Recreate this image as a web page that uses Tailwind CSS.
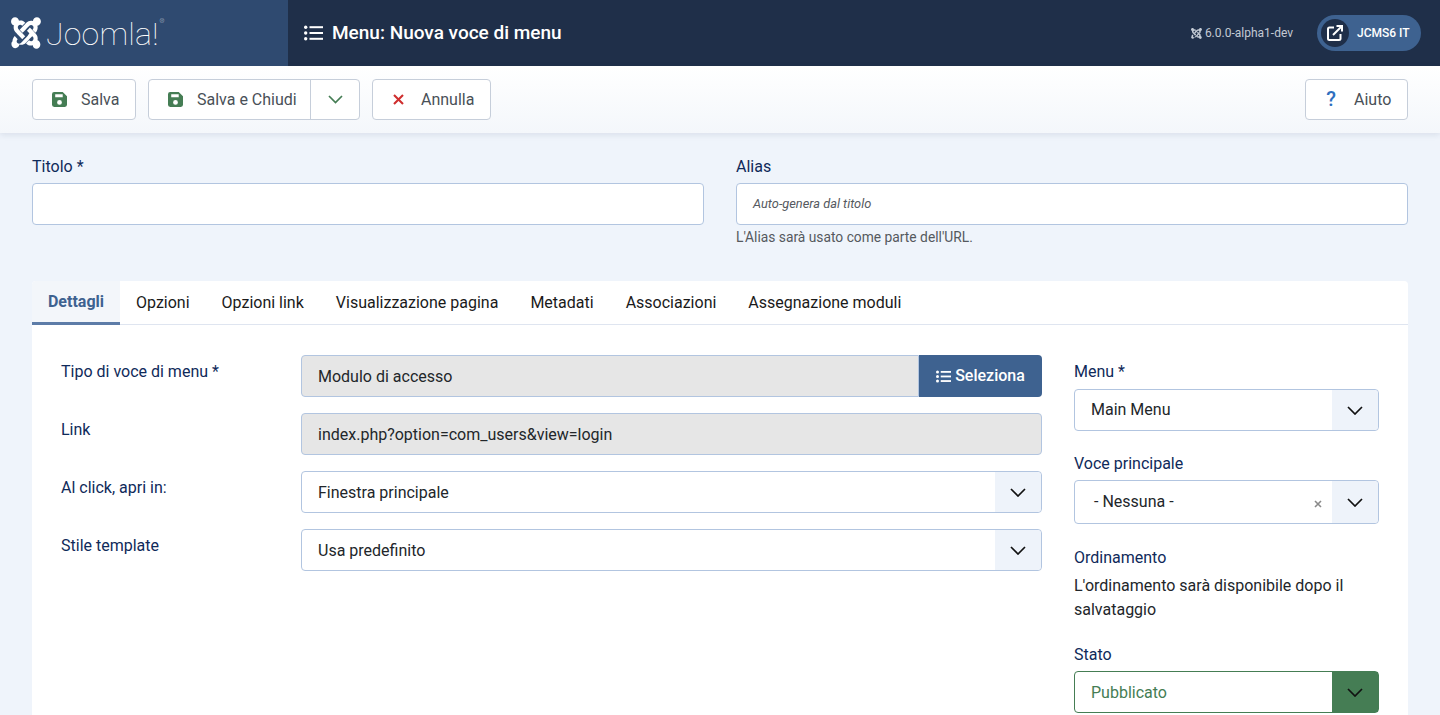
<!doctype html>
<html lang="it">
<head>
<meta charset="utf-8">
<title>Menu: Nuova voce di menu</title>
<script src="https://cdn.jsdelivr.net/npm/@tailwindcss/browser@4"></script>
</head>
<body class="h-[715px] overflow-hidden bg-[#eff4fb] font-['Roboto',sans-serif] text-[16px] text-[#22262a]">
<header class="flex h-[66px] bg-[#1f2f49] text-white">
  <div class="flex w-[288px] items-center gap-[5px] bg-[#2f4a70] pl-[11px]">
    <svg class="h-[32px] w-[30px]" viewBox="0 28 448 456" preserveAspectRatio="none" fill="#fff"><path d="M.6 92.1C.6 58.8 27.4 32 60.4 32c30 0 54.5 21.9 59.2 50.2 32.6-7.6 67.1.6 92.6 26.1l.9.9-44.3 44.3-.9-.9c-20.5-20.5-42.6-16.3-55.4-3.5-14.3 14.3-14.3 37.9 0 52.2l99.5 99.5-44 44.3c-87.7-87.2-49.7-49.7-99.8-99.7-26.8-26.5-35-64.8-24.8-98.9C20.4 144.6.6 120.7.6 92.1zm129.5 116.4l44.3 44.3c10-10 89.7-89.7 99.7-99.8 14.3-14.3 37.6-14.3 51.9 0 12.8 12.8 17 35-3.5 55.4l-.9.9 44 44.3c31.2-31.2 38.5-67.6 28.9-101.2 29.2-4.1 51.9-29.2 51.9-59.5 0-33.2-26.8-60.1-59.8-60.1-30.3 0-55.4 22.5-59.5 51.6-33.8-9.9-71.7-1.5-98.3 25.1-18.3 19.1-71.1 71.5-99.6 99.9zm266.3 152.2c8.2-32.7-.9-68.5-26.3-93.9-11.8-12.1-75.4-75.7-87.4-87.4l-44.3 44.3c25.6 25.6 62.4 62.1 87.5 87.5 14.3 14.3 14.3 37.6 0 51.9-12.8 12.8-35 17-55.4-3.5l-.9-.9-44 44.3.9.9c27.6 27.9 65.3 36.7 99.5 27.1C326.1 461.7 350.3 480 378.6 480c33 0 59.8-26.8 59.8-60.1 0-28.6-20-52.7-42-59.2zm-149-60.4c-29.1 29.3-73.6 73.7-99.8 99.7-14.3 14.3-37.6 14.3-51.9 0-13.1-13.1-16.9-35.4 3.5-55.4l.9-.9-44.3-44.3-.9.9c-30.2 30.2-38.3 65.6-29.2 99.5C29.3 356.3 6 381.6 6 412.3c0 33.2 26.8 60.1 59.8 60.1 30.3 0 54.5-23 59.5-52 34.1 9.8 71.5 1 98.3-25.6 44.2-44.2 62.5-62.6 99.8-99.7l-44.3-44.3z"/></svg>
    <span class="relative pt-[2px] text-[32px] leading-none font-thin tracking-[0.2px]">Joomla!<span class="absolute top-[2px] -right-[6px] text-[6px]">®</span></span>
  </div>
  <div class="flex flex-1 items-center pr-[19px] pl-[16px]">
    <svg class="mr-[9px] h-[16px] w-[19px]" viewBox="0 0 19 16" fill="#fff"><circle cx="1.7" cy="2.2" r="1.7"/><circle cx="1.7" cy="8" r="1.7"/><circle cx="1.7" cy="13.8" r="1.7"/><rect x="5.5" y="1.2" width="13.5" height="2"/><rect x="5.5" y="7" width="13.5" height="2"/><rect x="5.5" y="12.8" width="13.5" height="2"/></svg>
    <h1 class="text-[19px] font-medium">Menu: Nuova voce di menu</h1>
    <div class="ml-auto flex items-center gap-[3px] text-[12px] text-[#c3cad4]">
      <svg class="h-[11px] w-[11px]" viewBox="0 28 448 456" preserveAspectRatio="none" fill="#c3cad4"><path d="M.6 92.1C.6 58.8 27.4 32 60.4 32c30 0 54.5 21.9 59.2 50.2 32.6-7.6 67.1.6 92.6 26.1l.9.9-44.3 44.3-.9-.9c-20.5-20.5-42.6-16.3-55.4-3.5-14.3 14.3-14.3 37.9 0 52.2l99.5 99.5-44 44.3c-87.7-87.2-49.7-49.7-99.8-99.7-26.8-26.5-35-64.8-24.8-98.9C20.4 144.6.6 120.7.6 92.1zm129.5 116.4l44.3 44.3c10-10 89.7-89.7 99.7-99.8 14.3-14.3 37.6-14.3 51.9 0 12.8 12.8 17 35-3.5 55.4l-.9.9 44 44.3c31.2-31.2 38.5-67.6 28.9-101.2 29.2-4.1 51.9-29.2 51.9-59.5 0-33.2-26.8-60.1-59.8-60.1-30.3 0-55.4 22.5-59.5 51.6-33.8-9.9-71.7-1.5-98.3 25.1-18.3 19.1-71.1 71.5-99.6 99.9zm266.3 152.2c8.2-32.7-.9-68.5-26.3-93.9-11.8-12.1-75.4-75.7-87.4-87.4l-44.3 44.3c25.6 25.6 62.4 62.1 87.5 87.5 14.3 14.3 14.3 37.6 0 51.9-12.8 12.8-35 17-55.4-3.5l-.9-.9-44 44.3.9.9c27.6 27.9 65.3 36.7 99.5 27.1C326.1 461.7 350.3 480 378.6 480c33 0 59.8-26.8 59.8-60.1 0-28.6-20-52.7-42-59.2zm-149-60.4c-29.1 29.3-73.6 73.7-99.8 99.7-14.3 14.3-37.6 14.3-51.9 0-13.1-13.1-16.9-35.4 3.5-55.4l.9-.9-44.3-44.3-.9.9c-30.2 30.2-38.3 65.6-29.2 99.5C29.3 356.3 6 381.6 6 412.3c0 33.2 26.8 60.1 59.8 60.1 30.3 0 54.5-23 59.5-52 34.1 9.8 71.5 1 98.3-25.6 44.2-44.2 62.5-62.6 99.8-99.7l-44.3-44.3z"/></svg>
      <span>6.0.0-alpha1-dev</span>
    </div>
    <div class="ml-[24px] flex h-[36px] w-[104px] items-center rounded-full bg-[#3e6290] pl-[4px]">
      <span class="flex h-[28px] w-[28px] items-center justify-center rounded-full bg-[#1f2f49]">
        <svg class="h-[18px] w-[18px]" viewBox="0 0 18 18" fill="none" stroke="#fff" stroke-width="2"><path d="M8 3.5 H3.5 A1.5 1.5 0 0 0 2 5 V14.5 A1.5 1.5 0 0 0 3.5 16 H13 A1.5 1.5 0 0 0 14.5 14.5 V10"/><path d="M7 11 L15.5 2.5"/><path d="M10.5 2 H16 V7.5" /></svg>
      </span>
      <span class="ml-[8px] text-[12px] font-medium whitespace-nowrap">JCMS6 IT</span>
    </div>
  </div>
</header>

<div class="flex h-[67px] items-center justify-between bg-gradient-to-b from-white to-[#f4f7fb] px-[32px] pb-[1px] shadow-[0_2px_6px_rgba(30,50,90,0.1)]">
  <div class="flex gap-[12px]">
    <button class="flex h-[41px] w-[104px] items-center rounded-[4px] border border-[#c6ceda] bg-white pt-[2px] pl-[19px] text-[#495057]">
      <svg class="mr-[14px] -mt-[2px] h-[15px] w-[15px]" viewBox="0 0 14 14" fill="#457d54"><path d="M2 0 H10 L14 4 V12 A2 2 0 0 1 12 14 H2 A2 2 0 0 1 0 12 V2 A2 2 0 0 1 2 0 Z M3 2 V5 H10 V2 Z M7 7.5 A2.2 2.2 0 1 0 7 12 A2.2 2.2 0 1 0 7 7.5 Z" fill-rule="evenodd"/></svg>Salva
    </button>
    <div class="flex h-[41px] w-[212px] rounded-[4px] border border-[#c6ceda] bg-white text-[#495057]">
      <button class="flex flex-1 items-center border-r border-[#c6ceda] pt-[2px] pl-[19px]">
        <svg class="mr-[14px] -mt-[2px] h-[15px] w-[15px]" viewBox="0 0 14 14" fill="#457d54"><path d="M2 0 H10 L14 4 V12 A2 2 0 0 1 12 14 H2 A2 2 0 0 1 0 12 V2 A2 2 0 0 1 2 0 Z M3 2 V5 H10 V2 Z M7 7.5 A2.2 2.2 0 1 0 7 12 A2.2 2.2 0 1 0 7 7.5 Z" fill-rule="evenodd"/></svg>Salva e Chiudi
      </button>
      <span class="flex w-[48px] items-center justify-center">
        <svg class="h-[9px] w-[15px]" viewBox="0 0 15 9" fill="none" stroke="#457d54" stroke-width="1.7"><path d="M1 1 L7.5 7.5 L14 1"/></svg>
      </span>
    </div>
    <button class="flex h-[41px] w-[119px] items-center rounded-[4px] border border-[#c6ceda] bg-white pt-[2px] pl-[20px] text-[#495057]">
      <svg class="mr-[17px] -mt-[2px] h-[11px] w-[11px]" viewBox="0 0 11 11" fill="none" stroke="#cf2e2e" stroke-width="2.1"><path d="M1 1 L10 10 M10 1 L1 10"/></svg>Annulla
    </button>
  </div>
  <button class="flex h-[41px] w-[103px] items-center rounded-[4px] border border-[#c6ceda] bg-white pt-[2px] pl-[20px] text-[#495057]">
    <span class="mr-[18px] -mt-[2px] w-[10px] text-[20px] font-medium text-[#2f6fbf]">?</span>Aiuto
  </button>
</div>

<main class="px-[32px] pt-[21px]">
  <div class="grid grid-cols-2 gap-[32px]">
    <div>
      <label class="block h-[29px] pt-[1px] leading-[24px] text-[#0f2a5a]">Titolo *</label>
      <div class="h-[42px] rounded-[4px] border border-[#b2c5e0] bg-white"></div>
    </div>
    <div>
      <label class="block h-[29px] pt-[1px] leading-[24px] text-[#0f2a5a]">Alias</label>
      <div class="flex h-[42px] items-center rounded-[4px] border border-[#b2c5e0] bg-white px-[16px] text-[12.8px] text-[#55595e] italic">Auto-genera dal titolo</div>
      <p class="mt-[2px] text-[13.8px] leading-[20px] text-[#55595e]">L'Alias sarà usato come parte dell'URL.</p>
    </div>
  </div>

  <section class="mt-[34px] h-[460px] rounded-t-[4px] bg-white">
    <nav class="flex h-[44px] border-b border-[#dfe5f0] text-[16px] text-[#1a1a1a]">
      <a class="-mb-px flex w-[88px] items-center justify-center rounded-tl-[4px] border-b-[3px] border-[#5d7ca8] bg-[#f3f6fa] font-bold text-[#3e6290]">Dettagli</a>
      <a class="flex items-center px-[16px]">Opzioni</a>
      <a class="flex items-center px-[16px]">Opzioni link</a>
      <a class="flex items-center px-[16px]">Visualizzazione pagina</a>
      <a class="flex items-center px-[16px]">Metadati</a>
      <a class="flex items-center px-[16px]">Associazioni</a>
      <a class="flex items-center px-[16px]">Assegnazione moduli</a>
    </nav>
    <div class="flex pt-[30px] pl-[29px]">
      <div class="w-[1013px]">
        <div class="mb-[16px] flex">
          <label class="w-[240px] pt-[5px] leading-[24px] text-[#0f2a5a]">Tipo di voce di menu *</label>
          <div class="flex h-[42px] w-[741px] rounded-[4px]">
            <div class="flex flex-1 items-center rounded-l-[4px] border border-[#b2c5e0] bg-[#e6e6e6] px-[16px] pt-[2px]">Modulo di accesso</div>
            <button class="flex w-[123px] items-center justify-center gap-[4px] rounded-r-[4px] bg-[#3e6290] font-medium text-white">
              <svg class="h-[13px] w-[15px]" viewBox="0 0 19 16" fill="#fff"><circle cx="1.9" cy="2.2" r="1.9"/><circle cx="1.9" cy="8" r="1.9"/><circle cx="1.9" cy="13.8" r="1.9"/><rect x="6" y="1" width="13" height="2.3"/><rect x="6" y="6.8" width="13" height="2.3"/><rect x="6" y="12.6" width="13" height="2.3"/></svg>Seleziona
            </button>
          </div>
        </div>
        <div class="mb-[16px] flex">
          <label class="w-[240px] pt-[5px] leading-[24px] text-[#0f2a5a]">Link</label>
          <div class="flex h-[42px] w-[741px] items-center rounded-[4px] border border-[#b2c5e0] bg-[#e6e6e6] px-[16px] pt-[2px]">index.php?option=com_users&amp;view=login</div>
        </div>
        <div class="mb-[16px] flex">
          <label class="w-[240px] pt-[5px] leading-[24px] text-[#0f2a5a]">Al click, apri in:</label>
          <div class="flex h-[42px] w-[741px] items-center justify-between rounded-[4px] border border-[#b2c5e0] bg-white pl-[16px]">
            <span class="pt-[2px]">Finestra principale</span>
            <span class="flex h-full w-[46px] items-center justify-center rounded-r-[4px] bg-[#eef3fa]"><svg class="h-[9px] w-[16px]" viewBox="0 0 16 9" fill="none" stroke="#111" stroke-width="1.7"><path d="M1 1 L8 8 L15 1"/></svg></span>
          </div>
        </div>
        <div class="flex">
          <label class="w-[240px] pt-[5px] leading-[24px] text-[#0f2a5a]">Stile template</label>
          <div class="flex h-[42px] w-[741px] items-center justify-between rounded-[4px] border border-[#b2c5e0] bg-white pl-[16px]">
            <span class="pt-[2px]">Usa predefinito</span>
            <span class="flex h-full w-[46px] items-center justify-center rounded-r-[4px] bg-[#eef3fa]"><svg class="h-[9px] w-[16px]" viewBox="0 0 16 9" fill="none" stroke="#111" stroke-width="1.7"><path d="M1 1 L8 8 L15 1"/></svg></span>
          </div>
        </div>
      </div>
      <aside class="-mt-[1px] w-[305px]">
        <label class="block h-[35px] pt-[6px] leading-[24px] text-[#0f2a5a]">Menu *</label>
        <div class="flex h-[42px] items-center justify-between rounded-[4px] border border-[#b2c5e0] bg-white pl-[16px]">
          <span>Main Menu</span>
          <span class="flex h-full w-[46px] items-center justify-center rounded-r-[4px] bg-[#eef3fa]"><svg class="h-[9px] w-[16px]" viewBox="0 0 16 9" fill="none" stroke="#111" stroke-width="1.7"><path d="M1 1 L8 8 L15 1"/></svg></span>
        </div>
        <label class="mt-[20px] block h-[29px] pt-[1px] leading-[24px] text-[#0f2a5a]">Voce principale</label>
        <div class="flex h-[44px] items-center justify-between rounded-[4px] border border-[#b2c5e0] bg-white pl-[19px]">
          <span class="-mt-[1px]">- Nessuna -</span>
          <span class="flex h-full items-center">
            <svg class="mr-[10px] mt-[3px] h-[8px] w-[8px]" viewBox="0 0 8 8" fill="none" stroke="#8a8a8a" stroke-width="1.6"><path d="M1 1 L7 7 M7 1 L1 7"/></svg>
            <span class="flex h-full w-[46px] items-center justify-center rounded-r-[4px] bg-[#eef3fa]"><svg class="h-[9px] w-[16px]" viewBox="0 0 16 9" fill="none" stroke="#111" stroke-width="1.7"><path d="M1 1 L8 8 L15 1"/></svg></span>
          </span>
        </div>
        <label class="mt-[21px] block pt-[1px] leading-[24px] text-[#0f2a5a]">Ordinamento</label>
        <p class="mt-[3px] pt-[1px] leading-[24px]">L'ordinamento sarà disponibile dopo il salvataggio</p>
        <label class="mt-[20px] block h-[29px] pt-[1px] leading-[24px] text-[#0f2a5a]">Stato</label>
        <div class="flex h-[42px] items-center justify-between rounded-[4px] border border-[#457d54] bg-white pl-[16px] text-[#457d54]">
          <span class="pt-[2px]">Pubblicato</span>
          <span class="flex h-full w-[46px] items-center justify-center bg-[#457d54]"><svg class="h-[9px] w-[16px]" viewBox="0 0 16 9" fill="none" stroke="#111" stroke-width="1.7"><path d="M1 1 L8 8 L15 1"/></svg></span>
        </div>
      </aside>
    </div>
  </section>
</main>
</body>
</html>
